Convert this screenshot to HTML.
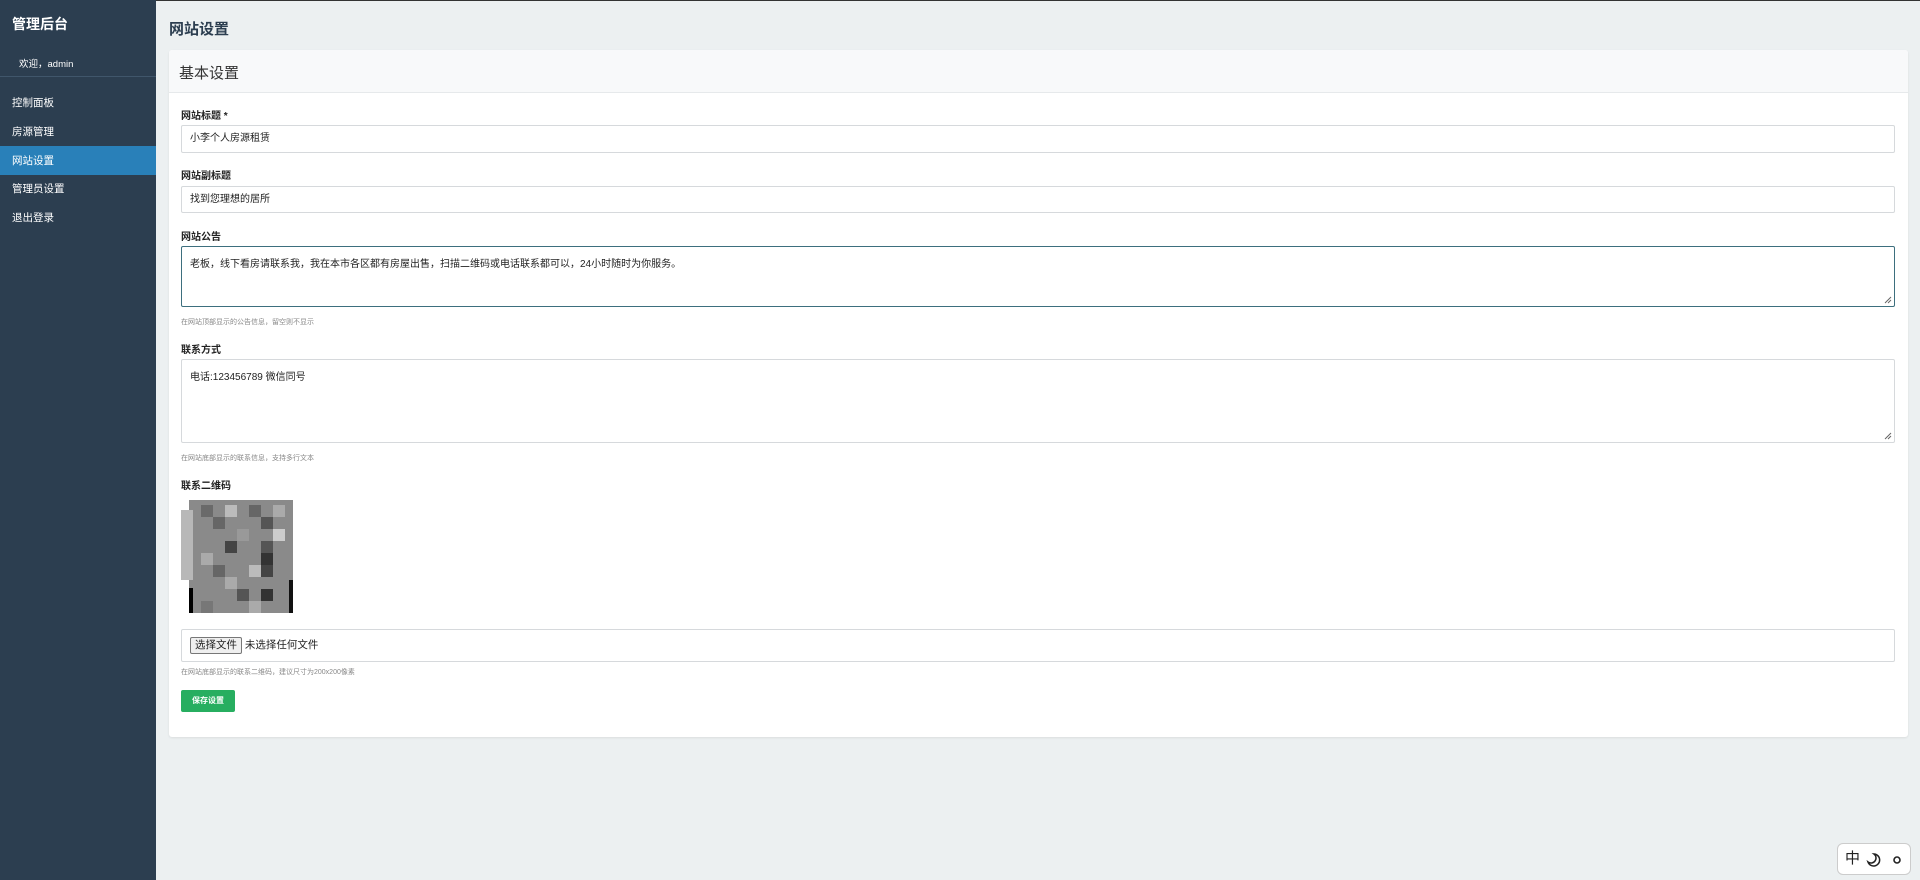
<!DOCTYPE html>
<html><head><meta charset="utf-8"><style>
*{box-sizing:border-box;margin:0;padding:0}
body{width:1920px;height:880px;overflow:hidden;background:#ecf0f1;font-family:"Liberation Sans","Noto Sans CJK SC",sans-serif;color:#222;position:relative}
.sb{position:absolute;left:0;top:0;width:156px;height:880px;background:#2c3e50;color:#fff}
.abs{position:absolute}
.sb .t{left:12px;top:14px;font-size:14px;font-weight:bold}
.sb .w{left:19px;top:56px;font-size:9.5px}
.sb .hr{left:0;top:76px;width:156px;height:1px;background:#40566b}
.sb .m{left:12px;font-size:10.5px;line-height:14px}
.act{left:0;top:146px;width:156px;height:29px;background:#2980b9}
.h1{left:169px;top:18px;font-size:15px;font-weight:bold;color:#2c3e50}
.card{left:169px;top:50px;width:1739px;height:687px;background:#fff;border-radius:3px;box-shadow:0 1px 2px rgba(0,0,0,.08)}
.ch{left:0;top:0;width:1739px;height:43px;background:#f8f9fa;border-bottom:1px solid #e6e9eb;border-radius:3px 3px 0 0}
.ch span{position:absolute;left:10px;top:12px;font-size:15px;color:#333}
.lb{left:181px;font-size:10px;color:#222;font-weight:600}
.in{left:181px;width:1714px;border:1px solid #d6d9dc;border-radius:2px;background:#fff;font-size:10px;padding:0 0 0 8px}
.hp{left:181px;font-size:7px;color:#888}
.rs{position:absolute;right:2px;bottom:2px}
</style></head><body>
<div class="abs" style="left:0;top:0;width:1920px;height:1px;background:#333"></div>
<div class="sb">
<div class="abs t">管理后台</div>
<div class="abs w">欢迎，admin</div>
<div class="abs hr"></div>
<div class="abs act"></div>
<div class="abs m" style="top:96px">控制面板</div>
<div class="abs m" style="top:125px">房源管理</div>
<div class="abs m" style="top:154px">网站设置</div>
<div class="abs m" style="top:182px">管理员设置</div>
<div class="abs m" style="top:211px">退出登录</div>
</div>
<div class="abs h1">网站设置</div>
<div class="abs card"><div class="abs ch"><span>基本设置</span></div></div>
<div class="abs lb" style="top:107px">网站标题 *</div>
<div class="abs in" style="top:125px;height:28px;line-height:26px">小李个人房源租赁</div>
<div class="abs lb" style="top:167px">网站副标题</div>
<div class="abs in" style="top:186px;height:27px;line-height:25px">找到您理想的居所</div>
<div class="abs lb" style="top:228px">网站公告</div>
<div class="abs in" style="top:246px;height:61px;border-color:#3d6f7e;padding-top:8px">老板，线下看房请联系我，我在本市各区都有房屋出售，扫描二维码或电话联系都可以，24小时随时为你服务。<svg class="rs" width="8" height="8"><path d="M1 7L7 1M4 7L7 4" stroke="#666"/></svg></div>
<div class="abs hp" style="top:317px">在网站顶部显示的公告信息，留空则不显示</div>
<div class="abs lb" style="top:341px">联系方式</div>
<div class="abs in" style="top:359px;height:84px;padding-top:8px">电话:123456789 微信同号<svg class="rs" width="8" height="8"><path d="M1 7L7 1M4 7L7 4" stroke="#666"/></svg></div>
<div class="abs hp" style="top:453px">在网站底部显示的联系信息，支持多行文本</div>
<div class="abs lb" style="top:477px">联系二维码</div>
<svg class="abs" style="left:181px;top:500px" width="120" height="113" viewBox="0 0 120 113">
<rect x="8" y="0" width="104" height="113" fill="#8a8a8a"/>
<rect x="0" y="10" width="12" height="70" fill="#b8b8b8"/>
<rect x="20" y="5" width="12" height="12" fill="#6a6a6a"/><rect x="44" y="5" width="12" height="12" fill="#bbb"/><rect x="68" y="5" width="12" height="12" fill="#666"/><rect x="92" y="5" width="12" height="12" fill="#aaa"/>
<rect x="32" y="17" width="12" height="12" fill="#666"/><rect x="80" y="17" width="12" height="12" fill="#555"/><rect x="56" y="29" width="12" height="12" fill="#999"/><rect x="92" y="29" width="12" height="12" fill="#ccc"/>
<rect x="44" y="41" width="12" height="12" fill="#444"/><rect x="80" y="41" width="12" height="12" fill="#555"/><rect x="20" y="53" width="12" height="12" fill="#aaa"/><rect x="80" y="53" width="12" height="12" fill="#333"/>
<rect x="32" y="65" width="12" height="12" fill="#666"/><rect x="68" y="65" width="12" height="12" fill="#bbb"/><rect x="80" y="65" width="12" height="12" fill="#444"/><rect x="44" y="77" width="12" height="12" fill="#aaa"/>
<rect x="56" y="89" width="12" height="12" fill="#555"/><rect x="80" y="89" width="12" height="12" fill="#333"/><rect x="20" y="101" width="12" height="12" fill="#777"/><rect x="68" y="101" width="12" height="12" fill="#aaa"/>
<rect x="8" y="88" width="4" height="25" fill="#000"/><rect x="108" y="80" width="4" height="33" fill="#111"/>
</svg>
<div class="abs in" style="top:629px;height:33px;font-size:10.5px;line-height:31px">
<span style="display:inline-block;border:1px solid #777;background:#efefef;padding:0 4px;line-height:15px;border-radius:2px;font-size:10.5px">选择文件</span> 未选择任何文件</div>
<div class="abs hp" style="top:667px">在网站底部显示的联系二维码，建议尺寸为200x200像素</div>
<div class="abs" style="left:181px;top:690px;width:54px;height:22px;background:#27ae60;color:#fff;font-size:8px;font-weight:bold;text-align:center;line-height:22px;border-radius:2px">保存设置</div>
<div class="abs" style="left:1837px;top:843px;width:74px;height:32px;background:#fff;border:1px solid #ccc;border-radius:6px;font-size:15px;line-height:30px;padding-left:7px;color:#222">中<svg style="position:absolute;left:27px;top:8px" width="40" height="16"><path d="M9 2A6 6 0 1 1 3 10 5 5 0 0 0 9 2Z" fill="none" stroke="#222" stroke-width="1.5"/><circle cx="32" cy="8" r="3" fill="none" stroke="#222" stroke-width="1.6"/></svg></div>
</body></html>
